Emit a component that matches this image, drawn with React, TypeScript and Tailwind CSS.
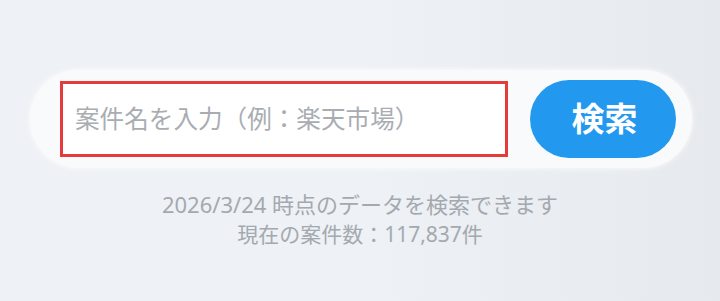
import React from "react";

export default function App() {
  const font = { fontFamily: '"Noto Sans", "Noto Sans CJK JP", sans-serif' };
  return (
    <div
      className="w-[720px] h-[301px] bg-gradient-to-r from-[#eef1f5] via-[#eef1f5] to-[#e6e9ed] flex flex-col items-center"
      style={font}
    >
      <div className="mt-[70px] ml-[2px] w-[662px] h-[98px] rounded-full bg-[#f9fafb] flex items-center pl-[30px] pr-[16px] shadow-[0_0_6px_rgba(255,255,255,0.9)]">
        <div className="w-[448px] h-[76px] border-[3px] border-[#e53b3b] bg-white flex items-center pl-[12px]">
          <input
            className="w-full outline-none bg-transparent text-[24.6px] text-[#4b5563] placeholder:text-[#a9adb2]"
            placeholder="案件名を入力（例：楽天市場）"
            style={font}
          />
        </div>
        <button className="ml-auto w-[146px] h-[78px] rounded-full bg-[#2299ee] text-white text-[33px] font-bold flex items-center justify-center pl-[3px]">
          検索
        </button>
      </div>
      <div className="mt-[21px] leading-[30px] text-[#a4a9af] text-center">
        <div className="text-[22px]">2026/3/24 時点のデータを検索できます</div>
        <div className="text-[21px]">現在の案件数：117,837件</div>
      </div>
    </div>
  );
}
